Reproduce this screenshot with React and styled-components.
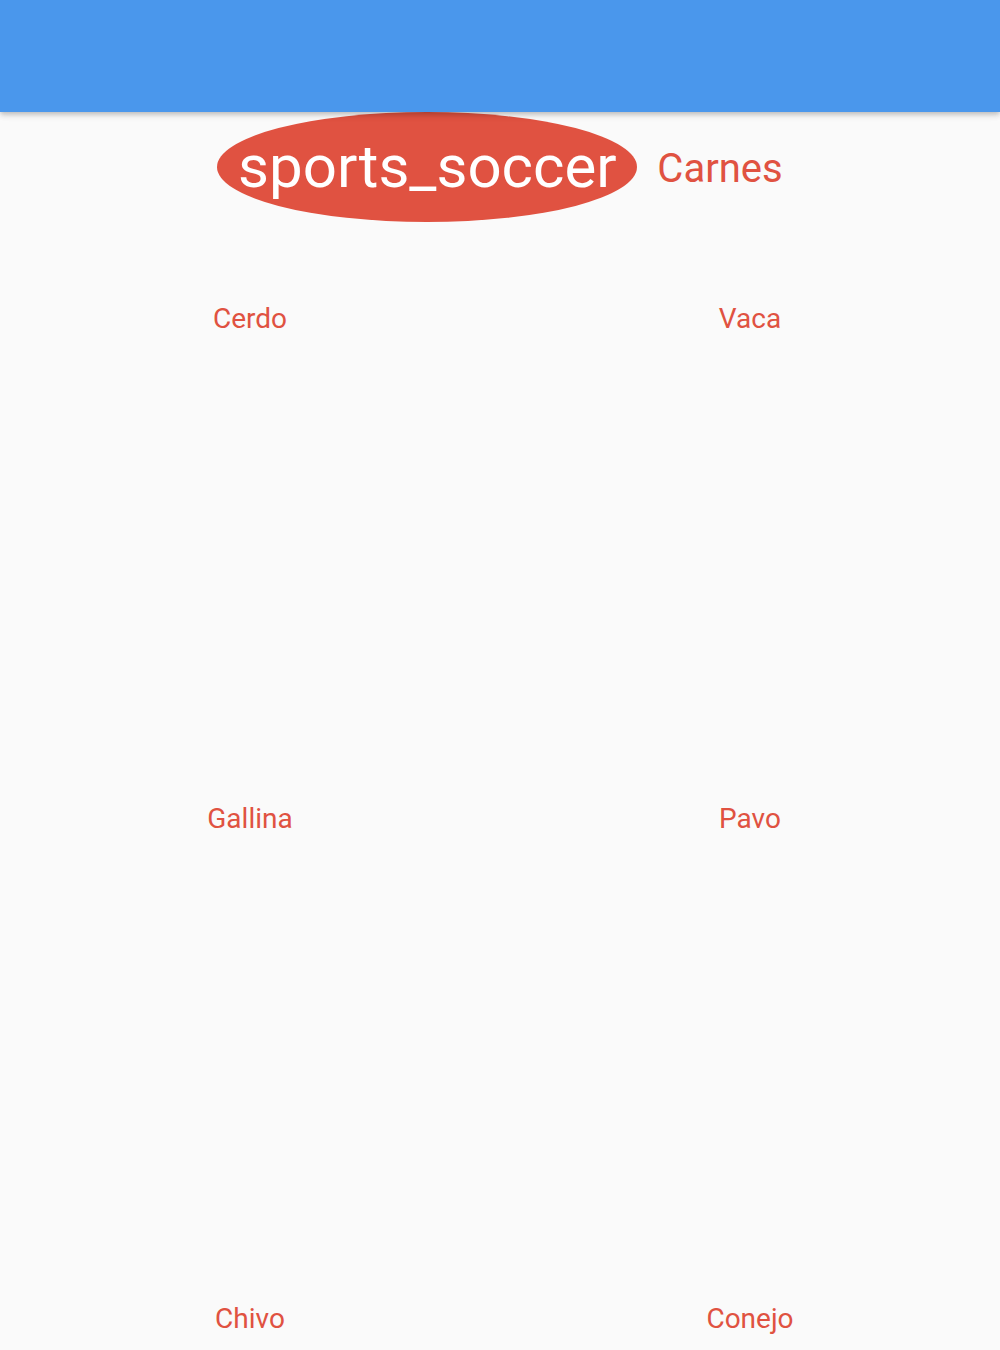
import React from 'react'
import styled, {createGlobalStyle} from 'styled-components'

const GlobalStyle = createGlobalStyle`
  html, body {
    margin: 0;
    padding: 0;
    background: #fafafa;
    font-family: Roboto, "Liberation Sans", sans-serif;
  }
`

const Page = styled.div`
  width: 1000px;
  height: 1350px;
  overflow: hidden;
  background: #fafafa;
`

const AppBar = styled.header`
  position: relative;
  z-index: 2;
  height: 112px;
  background: #4a97ec;
  box-shadow: 0 2px 4px -1px rgba(0, 0, 0, 0.14), 0 4px 5px 0 rgba(0, 0, 0, 0.1), 0 1px 10px 0 rgba(0, 0, 0, 0.08);
`

const Header = styled.div`
  display: flex;
  justify-content: center;
  align-items: center;
  gap: 20px;
`

const Badge = styled.div`
  width: 420px;
  height: 110px;
  border-radius: 50%;
  background: #e05241;
  color: #fff;
  display: flex;
  align-items: center;
  justify-content: center;
  font-size: 60px;
  line-height: 1;
`

const Title = styled.div`
  color: #e05241;
  font-size: 40px;
  line-height: 1;
  padding-top: 4px;
`

const Grid = styled.div`
  display: grid;
  grid-template-columns: 1fr 1fr;
  grid-auto-rows: 500px;
`

const Cell = styled.div`
  display: flex;
  justify-content: center;
  padding-top: 80px;
  color: #e05241;
  font-size: 28px;
  line-height: 33px;
`

const carnes = ['Cerdo', 'Vaca', 'Gallina', 'Pavo', 'Chivo', 'Conejo']

export default function App() {
  return (
    <Page>
      <GlobalStyle/>
      <AppBar/>
      <Header>
        <Badge>sports_soccer</Badge>
        <Title>Carnes</Title>
      </Header>
      <Grid>
        {carnes.map(name => <Cell key={name}>{name}</Cell>)}
      </Grid>
    </Page>
  )
}
